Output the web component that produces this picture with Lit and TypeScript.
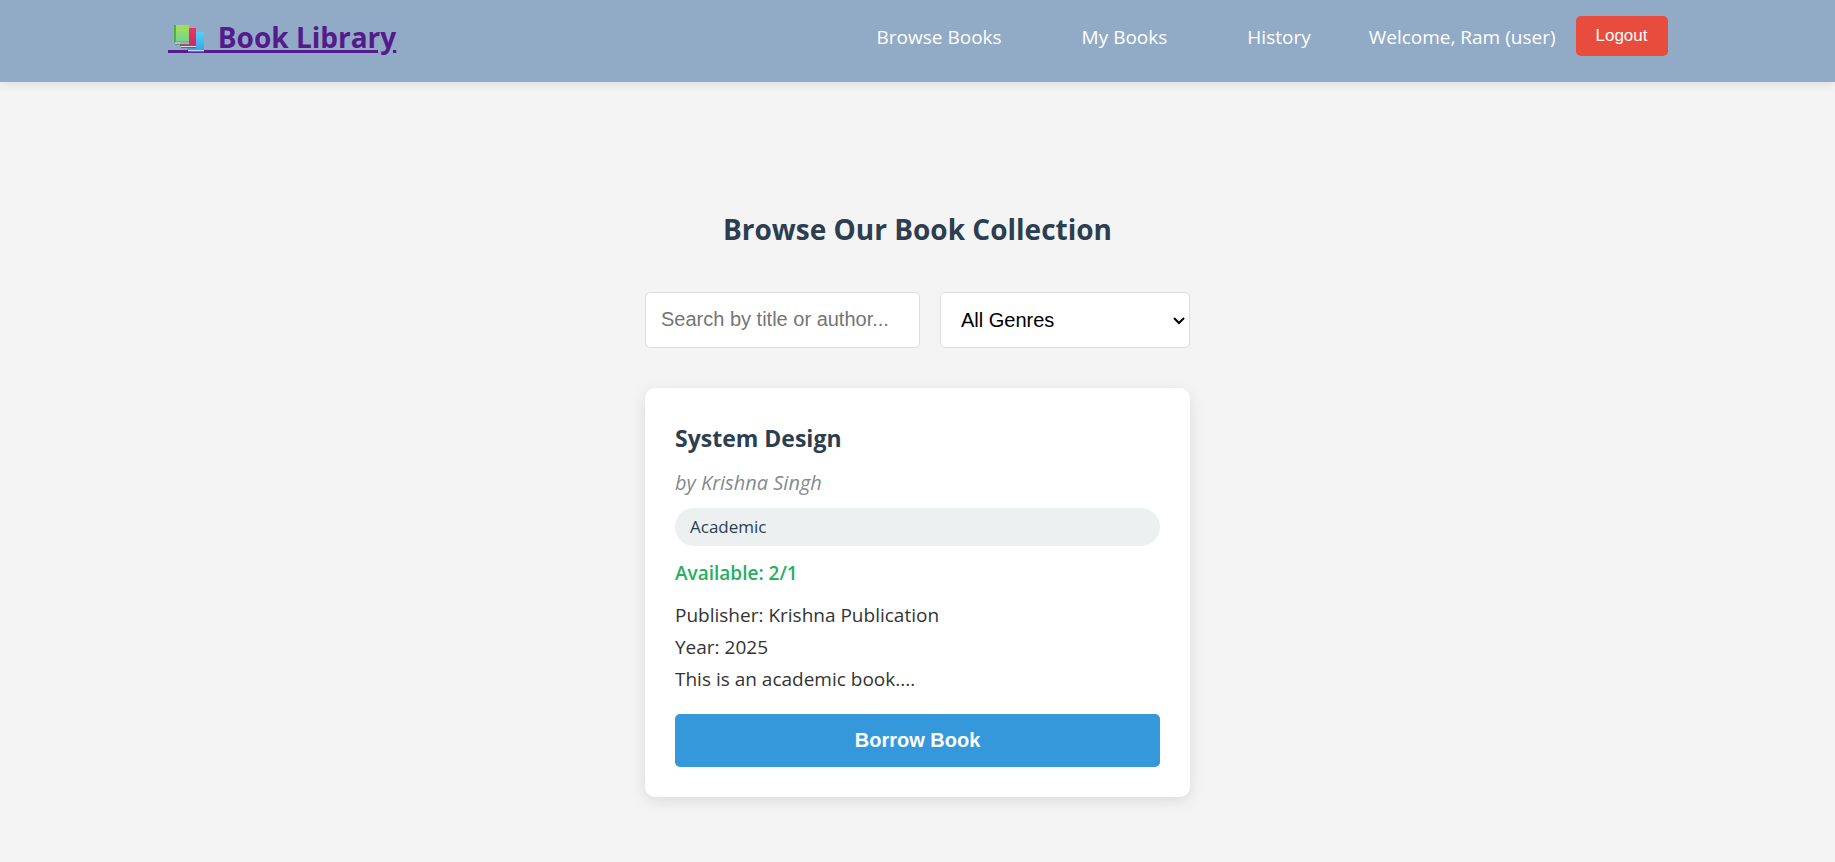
import { LitElement, html, css } from "lit";
import { customElement, state } from "lit/decorators.js";

interface Book {
  title: string;
  author: string;
  genre: string;
  available: number;
  total: number;
  publisher: string;
  year: number;
  description: string;
}

const BOOKS: Book[] = [
  {
    title: "System Design",
    author: "Krishna Singh",
    genre: "Academic",
    available: 2,
    total: 1,
    publisher: "Krishna Publication",
    year: 2025,
    description: "This is an academic book.",
  },
];

@customElement("site-header")
class SiteHeader extends LitElement {
  static styles = css`
    :host {
      display: block;
      background: #91aac6;
      box-shadow: 0 2px 10px rgba(0, 0, 0, 0.1);
    }
    .bar {
      display: flex;
      justify-content: space-between;
      align-items: flex-start;
      max-width: 1500px;
      min-height: 66px;
      margin: 0 auto;
      padding: 16px 20px 0;
    }
    .logo {
      display: flex;
      color: #551a8b;
      font-size: 28px;
      font-weight: 700;
      line-height: 42px;
      text-decoration: underline;
      text-decoration-thickness: 3px;
      text-underline-offset: 2px;
      white-space: pre;
    }
    .books {
      display: block;
      width: 43px;
      height: 44px;
    }
    .nav {
      display: flex;
      align-items: flex-start;
      color: #fff;
      font-size: 19px;
      line-height: 42px;
    }
    .links {
      display: flex;
      gap: 80px;
      margin: 0 58px 0 0;
      padding: 0;
      list-style: none;
    }
    .link {
      color: inherit;
      text-decoration: none;
    }
    .logout {
      margin-left: 20px;
      padding: 0 20px;
      height: 40px;
      border: 0;
      border-radius: 5px;
      background: #e74c3c;
      color: #fff;
      font: 17px "Liberation Sans", Arial, sans-serif;
      cursor: pointer;
    }
  `;

  render() {
    return html`
      <header class="bar">
        <a class="logo" href="#"
          ><svg class="books" viewBox="0 0 43 44" aria-hidden="true">
            <defs>
              <linearGradient id="green" x1="0" y1="0" x2="0" y2="1">
                <stop offset="0" stop-color="#a8e04f" />
                <stop offset="1" stop-color="#70d494" />
              </linearGradient>
              <linearGradient id="red" x1="0" y1="0" x2="0" y2="1">
                <stop offset="0" stop-color="#f0306c" />
                <stop offset="1" stop-color="#c92c63" />
              </linearGradient>
              <linearGradient id="blue" x1="0" y1="0" x2="0" y2="1">
                <stop offset="0" stop-color="#54d0f6" />
                <stop offset="1" stop-color="#35a6ee" />
              </linearGradient>
            </defs>
            <rect x="0" y="34" width="43" height="3" fill="#551a8b" />
            <path d="M21 16h15v18H19v-2z" fill="url(#blue)" />
            <path d="M20 34h16v1.400H20z" fill="#c9d5ee" />
            <path d="M20 35.400h16v.8H20z" fill="#2f83d8" />
            <path d="M14 12h14v18H12v-2z" fill="url(#red)" />
            <path d="M13 30h15v1.200H13z" fill="#e9d3e4" />
            <path d="M13 31.200h15v.9H13z" fill="#bb2157" />
            <path d="M6 9h15v17H6z" fill="url(#green)" />
            <path d="M6 9h2v17H6z" fill="#56ab4c" />
            <path d="M6 25.600h15v.9H6z" fill="#4fa06a" />
            <path d="M7 26.500h14v1.300H7z" fill="#d5dde2" />
            <path d="M7 27.800h14v.9H7z" fill="#4b8f68" />
          </svg><span> Book Library</span></a
        >
        <nav class="nav">
          <ul class="links">
            <li><a class="link" href="#browse">Browse Books</a></li>
            <li><a class="link" href="#mine">My Books</a></li>
            <li><a class="link" href="#history">History</a></li>
          </ul>
          <span>Welcome, Ram (user)</span>
          <button class="logout" type="button">Logout</button>
        </nav>
      </header>
    `;
  }
}

@customElement("book-card")
class BookCard extends LitElement {
  static properties = { book: { attribute: false } };
  declare book: Book;

  static styles = css`
    :host {
      display: block;
      padding: 30px;
      border-radius: 10px;
      background: #fff;
      box-shadow: 0 4px 15px rgba(0, 0, 0, 0.1);
      font-size: 19px;
      line-height: 32px;
    }
    .title {
      margin: 0 0 9px;
      color: #2c3e50;
      font-size: 23px;
      font-weight: 700;
      line-height: 40px;
    }
    .author {
      margin: 0 0 9px;
      color: #7f8c8d;
      font-size: 20px;
      font-style: italic;
    }
    .genre {
      margin: 0 0 11px;
      padding: 5px 15px;
      border-radius: 20px;
      background: #ecf0f1;
      color: #2c3e50;
      font-size: 17px;
      line-height: 28px;
    }
    .stock {
      margin: 0 0 10px;
      color: #27ae60;
      font-weight: 600;
    }
    .line {
      margin: 0;
    }
    .borrow {
      display: block;
      width: 100%;
      margin-top: 19px;
      padding: 15px;
      border: 0;
      border-radius: 5px;
      background: #3498db;
      color: #fff;
      font: 700 20px/23px "Liberation Sans", Arial, sans-serif;
      cursor: pointer;
    }
  `;

  render() {
    const b = this.book;
    return html`
      <h3 class="title">${b.title}</h3>
      <p class="author">by ${b.author}</p>
      <p class="genre">${b.genre}</p>
      <p class="stock">Available: ${b.available}/${b.total}</p>
      <p class="line">Publisher: ${b.publisher}</p>
      <p class="line">Year: ${b.year}</p>
      <p class="line">${b.description}...</p>
      <button class="borrow" type="button">Borrow Book</button>
    `;
  }
}

@customElement("app-root")
class AppRoot extends LitElement {
  @state() query = "";
  @state() genre = "";

  static styles = css`
    :host {
      display: block;
      min-height: 100vh;
      background: #f4f4f4;
      color: #333;
      font-family: "Segoe UI", "Open Sans", sans-serif;
    }
    .main {
      width: fit-content;
      margin: 0 auto;
      padding: 121px 20px 40px;
    }
    .heading {
      margin: 0 0 37px;
      color: #2c3e50;
      font-size: 28px;
      font-weight: 700;
      line-height: 52px;
      text-align: center;
    }
    .filters {
      display: flex;
      gap: 20px;
      margin-bottom: 40px;
    }
    .field {
      box-sizing: border-box;
      height: 56px;
      border: 1px solid #ddd;
      border-radius: 5px;
      background: #fff;
      font: 20px "Liberation Sans", Arial, sans-serif;
    }
    .search {
      width: 275px;
      padding: 14px 15px 16px;
    }
    .picker {
      position: relative;
    }
    .genres {
      width: 250px;
      padding: 0 24px 0 20px;
      color: #000;
      appearance: none;
    }
    .chevron {
      position: absolute;
      right: 5px;
      top: 24px;
      width: 12px;
      height: 9px;
      pointer-events: none;
    }
    .list {
      display: grid;
      gap: 30px;
    }
  `;

  render() {
    const shown = BOOKS.filter(
      (b) =>
        (b.title + " " + b.author).toLowerCase().includes(this.query.toLowerCase()) &&
        (!this.genre || b.genre === this.genre)
    );
    return html`
      <site-header></site-header>
      <main class="main">
        <h2 class="heading">Browse Our Book Collection</h2>
        <div class="filters">
          <input
            class="field search"
            type="text"
            aria-label="Search by title or author"
            placeholder="Search by title or author..."
            @input=${(e: Event) => (this.query = (e.target as HTMLInputElement).value)}
          />
          <div class="picker">
            <select
              class="field genres"
              aria-label="Genre"
              @change=${(e: Event) => (this.genre = (e.target as HTMLSelectElement).value)}
            >
              <option value="">All Genres</option>
              <option value="Academic">Academic</option>
            </select>
            <svg class="chevron" viewBox="0 0 12 9" aria-hidden="true">
              <path d="M1 2L6 7L11 2" fill="none" stroke="#000" stroke-width="2" />
            </svg>
          </div>
        </div>
        <div class="list">${shown.map((b) => html`<book-card .book=${b}></book-card>`)}</div>
      </main>
    `;
  }
}
